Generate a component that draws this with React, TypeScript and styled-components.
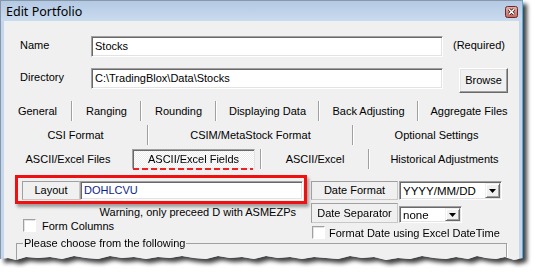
import styled, { createGlobalStyle } from "styled-components";

const GlobalStyle = createGlobalStyle`
  html, body {
    margin: 0;
    padding: 0;
    background: #fff;
  }
  body {
    font-family: "Liberation Sans", Arial, sans-serif;
    font-size: 11px;
    color: #000;
  }
`;

// torn paper bottom of the screenshot
const tornEdge = [
  [523, 258], [514, 260], [505, 257], [496, 259], [486, 258], [477, 256], [468, 259],
  [456, 257], [446, 259], [434, 258], [422, 256], [410, 259], [398, 258], [386, 260],
  [374, 257], [362, 258], [350, 256], [338, 259], [326, 258], [314, 257], [302, 259],
  [290, 257], [278, 258], [266, 256], [254, 259], [242, 257], [230, 258], [218, 256],
  [206, 259], [194, 258], [182, 256], [170, 258], [158, 257], [146, 259], [134, 257],
  [122, 258], [110, 256], [98, 259], [86, 258], [74, 256], [62, 259], [50, 257],
  [38, 258], [26, 257], [16, 260], [8, 258], [0, 259],
]
  .map(([x, y]) => `${x}px ${y}px`)
  .join(", ");

const App = () => {
  return (
    <>
      <GlobalStyle />
      <Shadow>
        <Frame>
          <TitleBar>
            <Title>Edit Portfolio</Title>
            <CloseButton>
              <svg width="13" height="12" viewBox="0 0 13 12">
                <defs>
                  <linearGradient id="cg" x1="0" y1="0" x2="0" y2="1">
                    <stop offset="0" stopColor="#e6b3ab" />
                    <stop offset="1" stopColor="#c4665c" />
                  </linearGradient>
                </defs>
                <rect x="0.5" y="0.5" width="12" height="11" rx="2" fill="url(#cg)" stroke="#6d2b27" />
                <path d="M4 3.2 L9 8.2 M9 3.2 L4 8.2" stroke="#3b1414" strokeWidth="3" />
                <path d="M4 3.2 L9 8.2 M9 3.2 L4 8.2" stroke="#fff" strokeWidth="1.6" />
              </svg>
            </CloseButton>
          </TitleBar>

          <Body>
            <FieldRow $top={15}>
              <FieldLabel>Name</FieldLabel>
              <TextBox $w={352}>Stocks</TextBox>
              <Note>(Required)</Note>
            </FieldRow>
            <FieldRow $top={11}>
              <FieldLabel>Directory</FieldLabel>
              <TextBox $w={352}>C:\TradingBlox\Data\Stocks</TextBox>
              <Button>Browse</Button>
            </FieldRow>

            <TabRows>
              <TabRow>
                <Tab $w={67}>General</Tab>
                <Sep />
                <Tab $w={67}>Ranging</Tab>
                <Sep />
                <Tab $w={73}>Rounding</Tab>
                <Sep />
                <Tab $w={101}>Displaying Data</Tab>
                <Sep />
                <Tab $w={97}>Back Adjusting</Tab>
                <Sep />
                <Tab>Aggregate Files</Tab>
              </TabRow>
              <TabRow>
                <Tab $w={143}>CSI Format</Tab>
                <Sep />
                <Tab $w={203}>CSIM/MetaStock Format</Tab>
                <Sep />
                <Tab>Optional Settings</Tab>
              </TabRow>
              <TabRow>
                <Tab $w={128}>ASCII/Excel Files</Tab>
                <ActiveTab>ASCII/Excel Fields</ActiveTab>
                <Sep />
                <Tab $w={106}>ASCII/Excel</Tab>
                <Sep />
                <Tab>Historical Adjustments</Tab>
              </TabRow>
            </TabRows>

            <Lower>
              <LeftCol>
                <RedBox>
                  <LabelBox $w={58}>Layout</LabelBox>
                  <LayoutInput>DOHLCVU</LayoutInput>
                </RedBox>
                <Warning>Warning, only preceed D with ASMEZPs</Warning>
                <CheckRow $left={8} $gap={6}>
                  <CheckBox />
                  Form Columns
                </CheckRow>
              </LeftCol>

              <RightCol>
                <DateRow>
                  <LabelBox $w={87}>Date Format</LabelBox>
                  <Select $w={103} $h={19}>
                    YYYY/MM/DD
                    <Arrow>
                      <svg width="7" height="4" viewBox="0 0 7 4">
                        <path d="M0 0 H7 L3.5 4 Z" fill="#000" />
                      </svg>
                    </Arrow>
                  </Select>
                </DateRow>
                <DateRow $top={3}>
                  <LabelBox $w={87} $h={20}>Date Separator</LabelBox>
                  <Select $w={63} $h={17} $top={3}>
                    none
                    <Arrow>
                      <svg width="7" height="4" viewBox="0 0 7 4">
                        <path d="M0 0 H7 L3.5 4 Z" fill="#000" />
                      </svg>
                    </Arrow>
                  </Select>
                </DateRow>
                <CheckRow $left={1} $gap={4} $top={3}>
                  <CheckBox />
                  Format Date using Excel DateTime
                </CheckRow>
              </RightCol>
            </Lower>

            <GroupBox>
              <legend>Please choose from the following</legend>
            </GroupBox>
          </Body>
        </Frame>
      </Shadow>
    </>
  );
};

export default App;

const Shadow = styled.div`
  width: 523px;
  filter: drop-shadow(4px 4px 2px rgba(0, 0, 0, 0.75));
`;

const Frame = styled.div`
  box-sizing: border-box;
  width: 523px;
  height: 268px;
  display: flex;
  flex-direction: column;
  padding: 0 3px;
  background: #c4d7ed;
  border-top: 1px solid #8796a8;
  border-left: 1px solid #8796a8;
  border-right: 1px solid #4eaee8;
  clip-path: polygon(0 0, 523px 0, ${tornEdge});
`;

const TitleBar = styled.div`
  height: 20px;
  display: flex;
  align-items: flex-start;
  justify-content: space-between;
  margin: 0 -3px;
  padding: 0 4px 0 5px;
  background: linear-gradient(#b4c9e3, #c9dbef);
`;

const Title = styled.div`
  font-family: "Noto Sans", "Open Sans", sans-serif;
  font-size: 12.5px;
  line-height: 21px;
  color: #000;
`;

const CloseButton = styled.div`
  margin-top: 5px;
  width: 13px;
  height: 12px;
  line-height: 0;
`;

const Body = styled.div`
  flex: 1;
  background: #f0f0f0;
`;

const FieldRow = styled.div<{ $top: number }>`
  display: flex;
  align-items: flex-start;
  padding-left: 16px;
  margin-top: ${(p) => p.$top}px;
`;

const FieldLabel = styled.div`
  width: 71px;
  line-height: 19px;
`;

const Sunken = styled.div`
  box-sizing: border-box;
  background: #fff;
  border: 1px solid;
  border-color: #a0a0a0 #fff #fff #a0a0a0;
  box-shadow: inset 1px 1px #696969, inset -1px -1px #e3e3e3;
`;

const TextBox = styled(Sunken)<{ $w: number }>`
  width: ${(p) => p.$w}px;
  height: 21px;
  padding-left: 3px;
  line-height: 19px;
  white-space: nowrap;
`;

const Note = styled.div`
  margin-left: 10px;
  line-height: 19px;
`;

const Button = styled.div`
  box-sizing: border-box;
  margin-left: 16px;
  width: 49px;
  height: 25px;
  line-height: 23px;
  text-align: center;
  border: 1px solid;
  border-color: #fff #696969 #696969 #fff;
  box-shadow: inset -1px -1px #a0a0a0, inset 1px 1px #e3e3e3;
`;

const TabRows = styled.div`
  margin-top: 6px;
`;

const TabRow = styled.div`
  display: flex;
  align-items: center;
  height: 24px;
`;

const Tab = styled.div<{ $w?: number }>`
  ${(p) => (p.$w ? `width: ${p.$w}px;` : "flex: 1;")}
  text-align: center;
  white-space: nowrap;
  line-height: 20px;
`;

const Sep = styled.div`
  width: 0;
  height: 20px;
  border-left: 1px solid #a0a0a0;
  border-right: 1px solid #fff;
`;

const ActiveTab = styled.div`
  position: relative;
  box-sizing: border-box;
  width: 123px;
  height: 20px;
  margin-right: 5px;
  line-height: 18px;
  text-align: center;
  border: 1px solid;
  border-color: #a0a0a0 #e3e3e3 #e3e3e3 #a0a0a0;
  box-shadow: inset 1px 1px #696969;
  background: repeating-conic-gradient(#fff 0 25%, #ececec 0 50%) 0 0 / 2px 2px;

  &::after {
    content: "";
    position: absolute;
    left: 0;
    right: 1px;
    bottom: -2px;
    height: 2px;
    background: repeating-linear-gradient(90deg, #ee2222 0 6px, transparent 6px 9px);
  }
`;

const Lower = styled.div`
  display: flex;
  align-items: flex-start;
  margin-top: 4px;
`;

const LeftCol = styled.div`
  margin-left: 11px;
  width: 292px;
`;

const RedBox = styled.div`
  display: flex;
  padding: 3px 1px 1px 4px;
  border: 3px solid #f01010;
  box-shadow: 2px 3px 3px rgba(0, 0, 0, 0.35);
`;

const LabelBox = styled.div<{ $w: number; $h?: number }>`
  box-sizing: border-box;
  width: ${(p) => p.$w}px;
  height: ${(p) => p.$h ?? 19}px;
  line-height: ${(p) => (p.$h ?? 19) - 2}px;
  text-align: center;
  white-space: nowrap;
  border: 1px solid;
  border-color: #a0a0a0 #c8c8c8 #c8c8c8 #a0a0a0;
`;

const LayoutInput = styled(Sunken)`
  flex: 1;
  height: 19px;
  padding-left: 3px;
  line-height: 17px;
  color: #0b1e8a;
`;

const Warning = styled.div`
  margin-top: 1px;
  padding-right: 11px;
  line-height: 14px;
  text-align: right;
  white-space: nowrap;
`;

const CheckRow = styled.div<{ $left: number; $gap: number; $top?: number }>`
  display: flex;
  align-items: center;
  gap: ${(p) => p.$gap}px;
  margin-left: ${(p) => p.$left}px;
  margin-top: ${(p) => p.$top ?? 0}px;
  height: 13px;
  white-space: nowrap;
`;

const CheckBox = styled(Sunken)`
  width: 13px;
  height: 13px;
  box-shadow: inset 1px 1px #e3e3e3;
`;

const RightCol = styled.div`
  display: flex;
  flex-direction: column;
  margin-left: 4px;
  margin-top: 6px;
`;

const DateRow = styled.div<{ $top?: number }>`
  display: flex;
  align-items: flex-start;
  gap: 1px;
  margin-top: ${(p) => p.$top ?? 0}px;
`;

const Select = styled(Sunken)<{ $w: number; $h: number; $top?: number }>`
  display: flex;
  align-items: center;
  justify-content: space-between;
  width: ${(p) => p.$w}px;
  height: ${(p) => p.$h}px;
  margin-top: ${(p) => p.$top ?? 0}px;
  padding: 0 1px 0 3px;
  font-size: 11.5px;
`;

const Arrow = styled.div`
  box-sizing: border-box;
  display: flex;
  align-items: center;
  justify-content: center;
  width: 15px;
  height: calc(100% - 2px);
  background: #f0f0f0;
  border: 1px solid;
  border-color: #f0f0f0 #696969 #696969 #f0f0f0;
  box-shadow: inset 1px 1px #fff, inset -1px -1px #a0a0a0;
`;

const GroupBox = styled.fieldset`
  box-sizing: border-box;
  margin: -2px 12px 0 12px;
  padding: 0 6px;
  height: 40px;
  border: 1px solid #a0a0a0;
  box-shadow: 1px 1px #fff;

  legend {
    padding: 0 1px;
    line-height: 12px;
  }
`;
